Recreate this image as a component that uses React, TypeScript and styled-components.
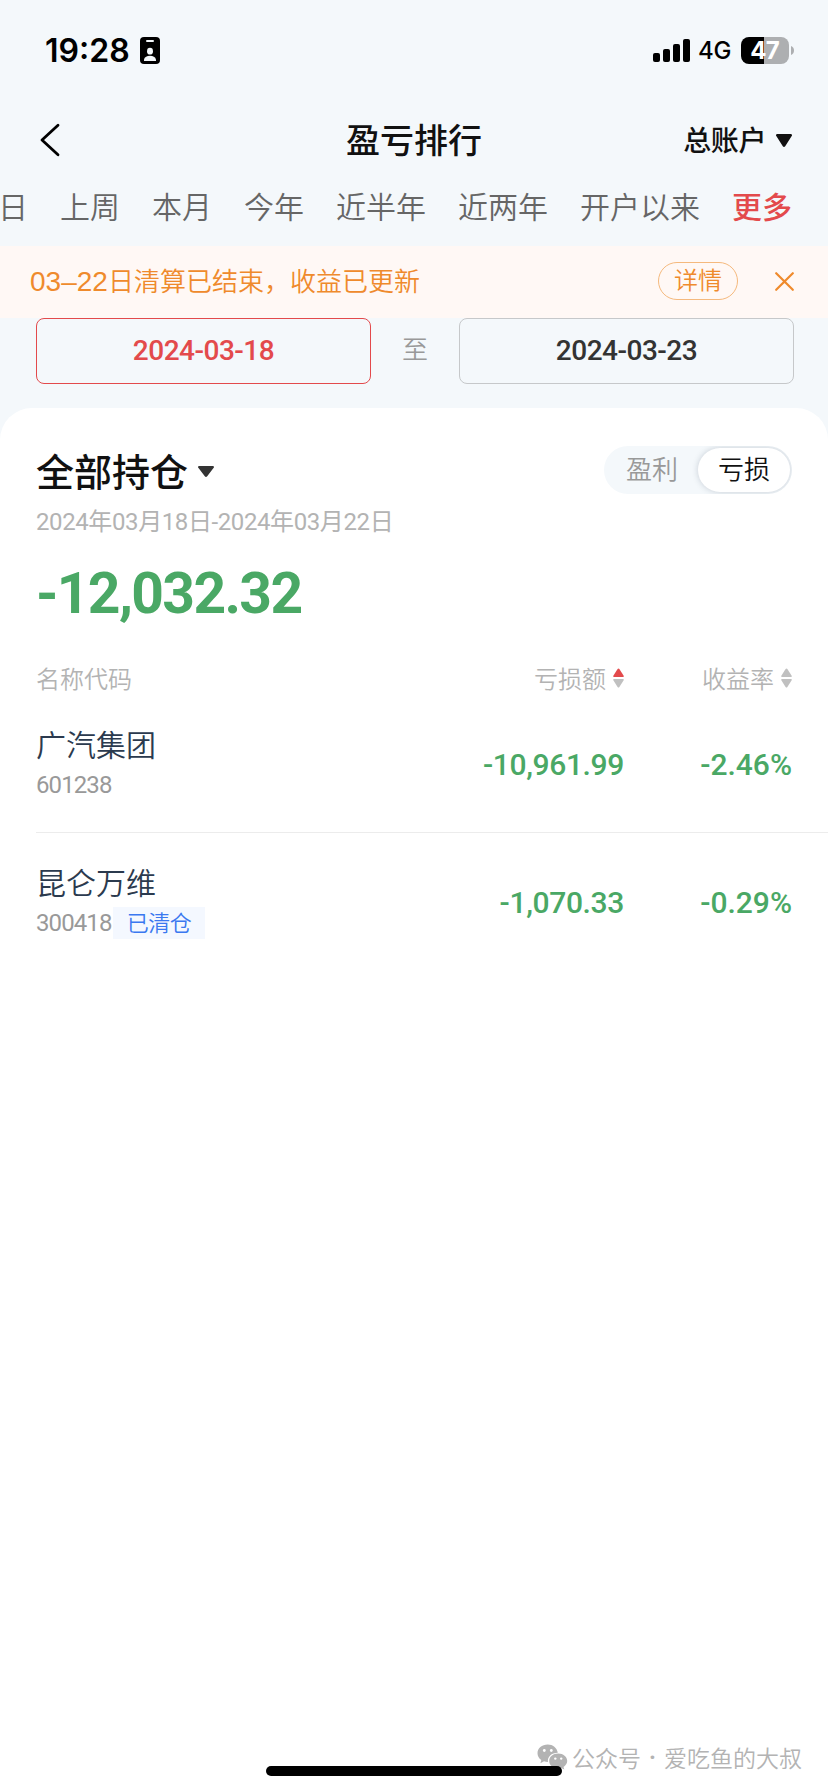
import React from 'react';
import styled, { createGlobalStyle } from 'styled-components';

const cjk = "'Noto Sans CJK SC', sans-serif";
const din = `Roboto, ${cjk}`;

const GlobalStyle = createGlobalStyle`
  * { box-sizing: border-box; }
  html, body { margin: 0; padding: 0; }
  body { width: 828px; background: #f4f8fb; font-family: ${cjk}; font-weight: 350; color: #111; }
  button { border: 0; padding: 0; margin: 0; background: none; font: inherit; color: inherit; }
`;

const Screen = styled.div`
  position: relative;
  display: flex;
  flex-direction: column;
  width: 828px;
  height: 1792px;
  overflow: hidden;
  background: #f4f8fb;
`;

const StatusBar = styled.header`
  display: flex;
  justify-content: space-between;
  align-items: center;
  height: 100px;
  padding: 0 34px 0 45px;
  font-family: Inter, sans-serif;
  color: #000;
`;

const Clock = styled.div`
  display: flex;
  align-items: center;
  gap: 10px;
  font-size: 32px;
  font-weight: 600;
  line-height: 40px;
`;

const Time = styled.span`
  padding-top: 1px;
`;

const Indicators = styled.div`
  display: flex;
  align-items: center;
`;

const Network = styled.span`
  margin: 2px 10px 0 8px;
  font-size: 24px;
  font-weight: 500;
  line-height: 28px;
  letter-spacing: -0.4px;
`;

const Battery = styled.div`
  display: flex;
  align-items: center;
  gap: 2px;
`;

const BatteryBody = styled.div`
  width: 48px;
  height: 27px;
  border-radius: 8px;
  background: linear-gradient(to right, #000 23px, #adafb1 23px);
  color: #fff;
  font-size: 24px;
  font-weight: 700;
  line-height: 27px;
  text-align: center;
  text-indent: -1px;
  letter-spacing: -0.8px;
`;

const NavBar = styled.nav`
  display: grid;
  grid-template-columns: 1fr auto 1fr;
  align-items: center;
  height: 80px;
  padding: 0 36px 0 40px;
`;

const BackButton = styled.button`
  display: flex;
  justify-self: start;
`;

const Title = styled.h1`
  margin: -3px 0 0 -4px;
  font-size: 34px;
  font-weight: 500;
  line-height: 48px;
`;

const Account = styled.button`
  display: flex;
  align-items: center;
  justify-self: end;
  gap: 10px;
  font-size: 28px;
  font-weight: 500;
  line-height: 40px;
  letter-spacing: -0.4px;
`;

const AccountName = styled.span`
  margin-top: -3px;
`;

const Tabs = styled.div`
  display: flex;
  justify-content: flex-end;
  gap: 32px;
  height: 66px;
  padding: 4px 36px 0 0;
  white-space: nowrap;
`;

const Tab = styled.button<{ $active?: boolean }>`
  height: 42px;
  flex: none;
  font-size: 30px;
  line-height: 42px;
  font-weight: ${(p) => (p.$active ? 500 : 350)};
  color: ${(p) => (p.$active ? '#e34a4c' : '#666')};
`;

const Notice = styled.div`
  display: flex;
  align-items: center;
  height: 72px;
  padding: 0 34px 0 30px;
  background: #fff8f5;
  color: #ef8a2c;
`;

const NoticeText = styled.p`
  flex: 1;
  margin: -3px 0 0;
  font-size: 26px;
  line-height: 36px;
`;

const NoticeDate = styled.span`
  font-family: 'Liberation Sans', sans-serif;
  font-size: 28px;
`;

const DetailButton = styled.button`
  width: 80px;
  height: 38px;
  margin-right: 37px;
  margin-top: -2px;
  padding-bottom: 5px;
  border: 1px solid #f5b97d;
  border-radius: 19px;
  font-size: 24px;
  line-height: 30px;
`;

const CloseButton = styled.button`
  display: flex;
  margin-top: -2px;
`;

const DateRange = styled.div`
  display: flex;
  justify-content: space-between;
  padding: 0 34px 24px 36px;
`;

const DateField = styled.button<{ $active?: boolean }>`
  width: 335px;
  height: 66px;
  border: 1px solid ${(p) => (p.$active ? '#e34a4c' : '#c6c8ca')};
  border-radius: 8px;
  font-family: ${din};
  font-size: 28px;
  font-weight: 500;
  line-height: 62px;
  letter-spacing: -0.5px;
  color: ${(p) => (p.$active ? '#e34a4c' : '#333')};
`;

const To = styled.span`
  font-size: 26px;
  line-height: 60px;
  color: #999;
`;

const Card = styled.main`
  flex: 1;
  padding-top: 38px;
  border-radius: 32px 32px 0 0;
  background: #fff;
`;

const CardHead = styled.div`
  display: flex;
  justify-content: space-between;
  align-items: flex-start;
  height: 58px;
  padding: 0 36px;
`;

const HoldingFilter = styled.button`
  display: flex;
  align-items: center;
  gap: 10px;
  font-size: 38px;
  font-weight: 500;
  line-height: 50px;
`;

const FilterName = styled.span`
  margin-top: -1px;
`;

const FilterCaret = styled.span`
  display: flex;
  margin-top: 1px;
`;

const Toggle = styled.div`
  display: flex;
  width: 188px;
  height: 48px;
  padding: 2px;
  border-radius: 24px;
  background: #f4f8fb;
  overflow: hidden;
`;

const ToggleOption = styled.button<{ $active?: boolean }>`
  width: 92px;
  height: 44px;
  padding-bottom: 4px;
  border-radius: 22px;
  font-size: 26px;
  line-height: 36px;
  color: ${(p) => (p.$active ? '#111' : '#999')};
  background: ${(p) => (p.$active ? '#fff' : 'transparent')};
  box-shadow: ${(p) => (p.$active ? '0 0 6px rgba(40, 60, 80, 0.22)' : 'none')};
`;

const Period = styled.div`
  padding: 0 36px;
  font-family: ${din};
  font-size: 24px;
  font-weight: 400;
  line-height: 36px;
  letter-spacing: -0.4px;
  color: #b3b3b3;
`;

const Total = styled.div`
  height: 121px;
  padding: 14px 36px 0;
  font-family: ${din};
  font-size: 57px;
  font-weight: 700;
  line-height: 80px;
  letter-spacing: -1.65px;
  color: #4aa865;
`;

const columns = '36px 1fr 180px 168px 36px';

const TableHead = styled.div`
  display: grid;
  grid-template-columns: ${columns};
  height: 33px;
  font-size: 24px;
  line-height: 34px;
  color: #b3b3b3;
`;

const HeadCell = styled.div<{ $col: number }>`
  grid-column: ${(p) => p.$col};
  display: flex;
  align-items: center;
  justify-content: ${(p) => (p.$col === 2 ? 'flex-start' : 'flex-end')};
  gap: 7px;
`;

const Row = styled.div`
  display: grid;
  grid-template-columns: ${columns};
  height: 138px;
`;

const Divider = styled.div`
  height: 1px;
  margin: 0 0 -1px 36px;
  background: #ececec;
`;

const Stock = styled.div`
  grid-column: 2;
  padding-top: 28px;
`;

const StockName = styled.div`
  font-size: 30px;
  line-height: 42px;
  color: #2b3a4e;
`;

const CodeLine = styled.div`
  display: flex;
  align-items: center;
  gap: 2px;
  height: 32px;
  margin-top: 5px;
  font-family: ${din};
  font-size: 24px;
  font-weight: 400;
  line-height: 32px;
  letter-spacing: -0.9px;
  color: #999;
`;

const ClearedTag = styled.span`
  width: 92px;
  height: 32px;
  margin-left: -0.6px;
  background: #f4f8ff;
  color: #3b78f0;
  font-family: ${cjk};
  font-size: 22px;
  font-weight: 350;
  line-height: 29px;
  letter-spacing: -0.5px;
  text-align: center;
`;

const Value = styled.div<{ $col: number }>`
  grid-column: ${(p) => p.$col};
  padding-top: 51px;
  font-family: ${din};
  font-size: 30px;
  font-weight: 500;
  line-height: 40px;
  letter-spacing: ${(p) => (p.$col === 3 ? '-0.35px' : '0')};
  text-align: right;
  white-space: nowrap;
  color: #4aa865;
`;

const Watermark = styled.footer`
  position: absolute;
  right: 26px;
  bottom: 17px;
  display: flex;
  align-items: center;
  font-size: 23px;
  line-height: 34px;
  color: #b3b3b3;
`;

const WatermarkIcon = styled.span`
  display: flex;
  margin-right: 4px;
`;

const Dot = styled.span`
  width: 23px;
  padding-top: 3px;
  font-family: Roboto, sans-serif;
  font-weight: 700;
  text-align: center;
`;

const HomeIndicator = styled.div`
  position: absolute;
  left: 266px;
  bottom: 16px;
  width: 296px;
  height: 10px;
  border-radius: 5px;
  background: #000;
`;

const IdBadgeIcon = () => (
  <svg width="20" height="27" viewBox="0 0 20 27">
    <rect width="20" height="27" rx="4" fill="#000" />
    <rect x="6" y="3" width="8" height="2" rx="1" fill="#f4f8fb" />
    <ellipse cx="10" cy="14.2" rx="3" ry="3.4" fill="#f4f8fb" />
    <path d="M4 24V22.5C4.6 20 7 18.8 10 18.8S15.4 20 16 22.5V24Z" fill="#f4f8fb" />
  </svg>
);

const SignalIcon = () => (
  <svg width="37" height="23" viewBox="0 0 37 23">
    <rect x="0" y="14" width="7" height="9" rx="2" />
    <rect x="10" y="10" width="7" height="13" rx="2" />
    <rect x="20" y="5" width="7" height="18" rx="2" />
    <rect x="30" y="0" width="7" height="23" rx="2" />
  </svg>
);

const BatteryTip = () => (
  <svg width="3" height="9" viewBox="0 0 3 9">
    <path d="M0 0C4 1.5 4 7.5 0 9Z" fill="#adafb1" />
  </svg>
);

const BackIcon = () => (
  <svg width="20" height="34" viewBox="0 0 20 34">
    <path d="M18 2.2L2 17L18 31.8" fill="none" stroke="#000" strokeWidth="2.8" strokeLinecap="round" strokeLinejoin="round" />
  </svg>
);

const CaretIcon = ({ height, color }: { height: number; color: string }) => (
  <svg width="16" height={height} viewBox="0 0 16 12" preserveAspectRatio="none">
    <path d="M1.3 0H14.7C15.9 0 16.4 1 15.7 1.9L9.2 11.2C8.5 12.2 7.5 12.2 6.8 11.2L0.3 1.9C-0.4 1 0.1 0 1.3 0Z" fill={color} />
  </svg>
);

const CloseIcon = () => (
  <svg width="19" height="19" viewBox="0 0 19 19">
    <path d="M1.2 1.2L17.8 17.8M17.8 1.2L1.2 17.8" stroke="#ef8a2c" strokeWidth="2.2" strokeLinecap="round" />
  </svg>
);

const SortIcon = ({ active }: { active?: boolean }) => (
  <svg width="11" height="20" viewBox="0 0 11 20">
    <path d="M5.5 0.5Q6 0.5 6.4 1.1L10.8 8Q11 9 10 9H1Q0 9 0.2 8L4.6 1.1Q5 0.5 5.5 0.5Z" fill={active ? '#e34a4c' : '#c0c0c0'} />
    <path d="M5.5 19.5Q6 19.5 6.4 18.9L10.8 12Q11 11 10 11H1Q0 11 0.2 12L4.6 18.9Q5 19.5 5.5 19.5Z" fill="#c0c0c0" />
  </svg>
);

const WechatIcon = () => (
  <svg width="31" height="26" viewBox="0 0 31 26">
    <path d="M10.8 0.5C4.8 0.5 0.5 4.3 0.5 9.2c0 2.8 1.4 5.2 3.8 6.8L3.4 19.2l3.6-1.9c1.3.4 2.5.6 4 .6-.9-4.9 3.4-9.2 9.8-9.2C19.9 3.8 15.8 0.5 10.8 0.5Z" fill="#b3b3b3" />
    <path d="M21.2 9.5c-5.2 0-9 3.3-9 7.5s3.8 7.5 9 7.5c1.1 0 2.2-.2 3.1-.4l3 1.5-.8-2.6c2.2-1.4 3.7-3.6 3.7-6 0-4.2-4-7.5-9-7.5Z" fill="#b3b3b3" />
    <circle cx="7.3" cy="6.5" r="1.4" fill="#fff" />
    <circle cx="14.3" cy="6.5" r="1.4" fill="#fff" />
    <circle cx="18.3" cy="14.6" r="1.2" fill="#fff" />
    <circle cx="24.2" cy="14.6" r="1.2" fill="#fff" />
  </svg>
);

const tabs = ['日', '上周', '本月', '今年', '近半年', '近两年', '开户以来', '更多'];

const holdings = [
  { name: '广汽集团', code: '601238', cleared: false, loss: '-10,961.99', rate: '-2.46%' },
  { name: '昆仑万维', code: '300418', cleared: true, loss: '-1,070.33', rate: '-0.29%' },
];

export default function App() {
  return (
    <>
      <GlobalStyle />
      <Screen>
        <StatusBar>
          <Clock><Time>19:28</Time><IdBadgeIcon /></Clock>
          <Indicators>
            <SignalIcon />
            <Network>4G</Network>
            <Battery>
              <BatteryBody>47</BatteryBody>
              <BatteryTip />
            </Battery>
          </Indicators>
        </StatusBar>
        <NavBar>
          <BackButton aria-label="返回"><BackIcon /></BackButton>
          <Title>盈亏排行</Title>
          <Account><AccountName>总账户</AccountName><CaretIcon height={13} color="#111" /></Account>
        </NavBar>
        <Tabs>
          {tabs.map((t) => <Tab key={t} $active={t === '更多'}>{t}</Tab>)}
        </Tabs>
        <Notice>
          <NoticeText><NoticeDate>03–22</NoticeDate>日清算已结束，收益已更新</NoticeText>
          <DetailButton>详情</DetailButton>
          <CloseButton aria-label="关闭"><CloseIcon /></CloseButton>
        </Notice>
        <DateRange>
          <DateField $active>2024-03-18</DateField>
          <To>至</To>
          <DateField>2024-03-23</DateField>
        </DateRange>
        <Card>
          <CardHead>
            <HoldingFilter>
              <FilterName>全部持仓</FilterName>
              <FilterCaret><CaretIcon height={11} color="#333" /></FilterCaret>
            </HoldingFilter>
            <Toggle>
              <ToggleOption>盈利</ToggleOption>
              <ToggleOption $active>亏损</ToggleOption>
            </Toggle>
          </CardHead>
          <Period>2024年03月18日-2024年03月22日</Period>
          <Total>-12,032.32</Total>
          <TableHead>
            <HeadCell $col={2}>名称代码</HeadCell>
            <HeadCell $col={3}>亏损额<SortIcon active /></HeadCell>
            <HeadCell $col={4}>收益率<SortIcon /></HeadCell>
          </TableHead>
          {holdings.map((h, i) => (
            <React.Fragment key={h.code}>
              {i > 0 && <Divider />}
              <Row>
                <Stock>
                  <StockName>{h.name}</StockName>
                  <CodeLine>{h.code}{h.cleared && <ClearedTag>已清仓</ClearedTag>}</CodeLine>
                </Stock>
                <Value $col={3}>{h.loss}</Value>
                <Value $col={4}>{h.rate}</Value>
              </Row>
            </React.Fragment>
          ))}
        </Card>
        <Watermark>
          <WatermarkIcon><WechatIcon /></WatermarkIcon>
          公众号<Dot>·</Dot>爱吃鱼的大叔
        </Watermark>
        <HomeIndicator />
      </Screen>
    </>
  );
}
